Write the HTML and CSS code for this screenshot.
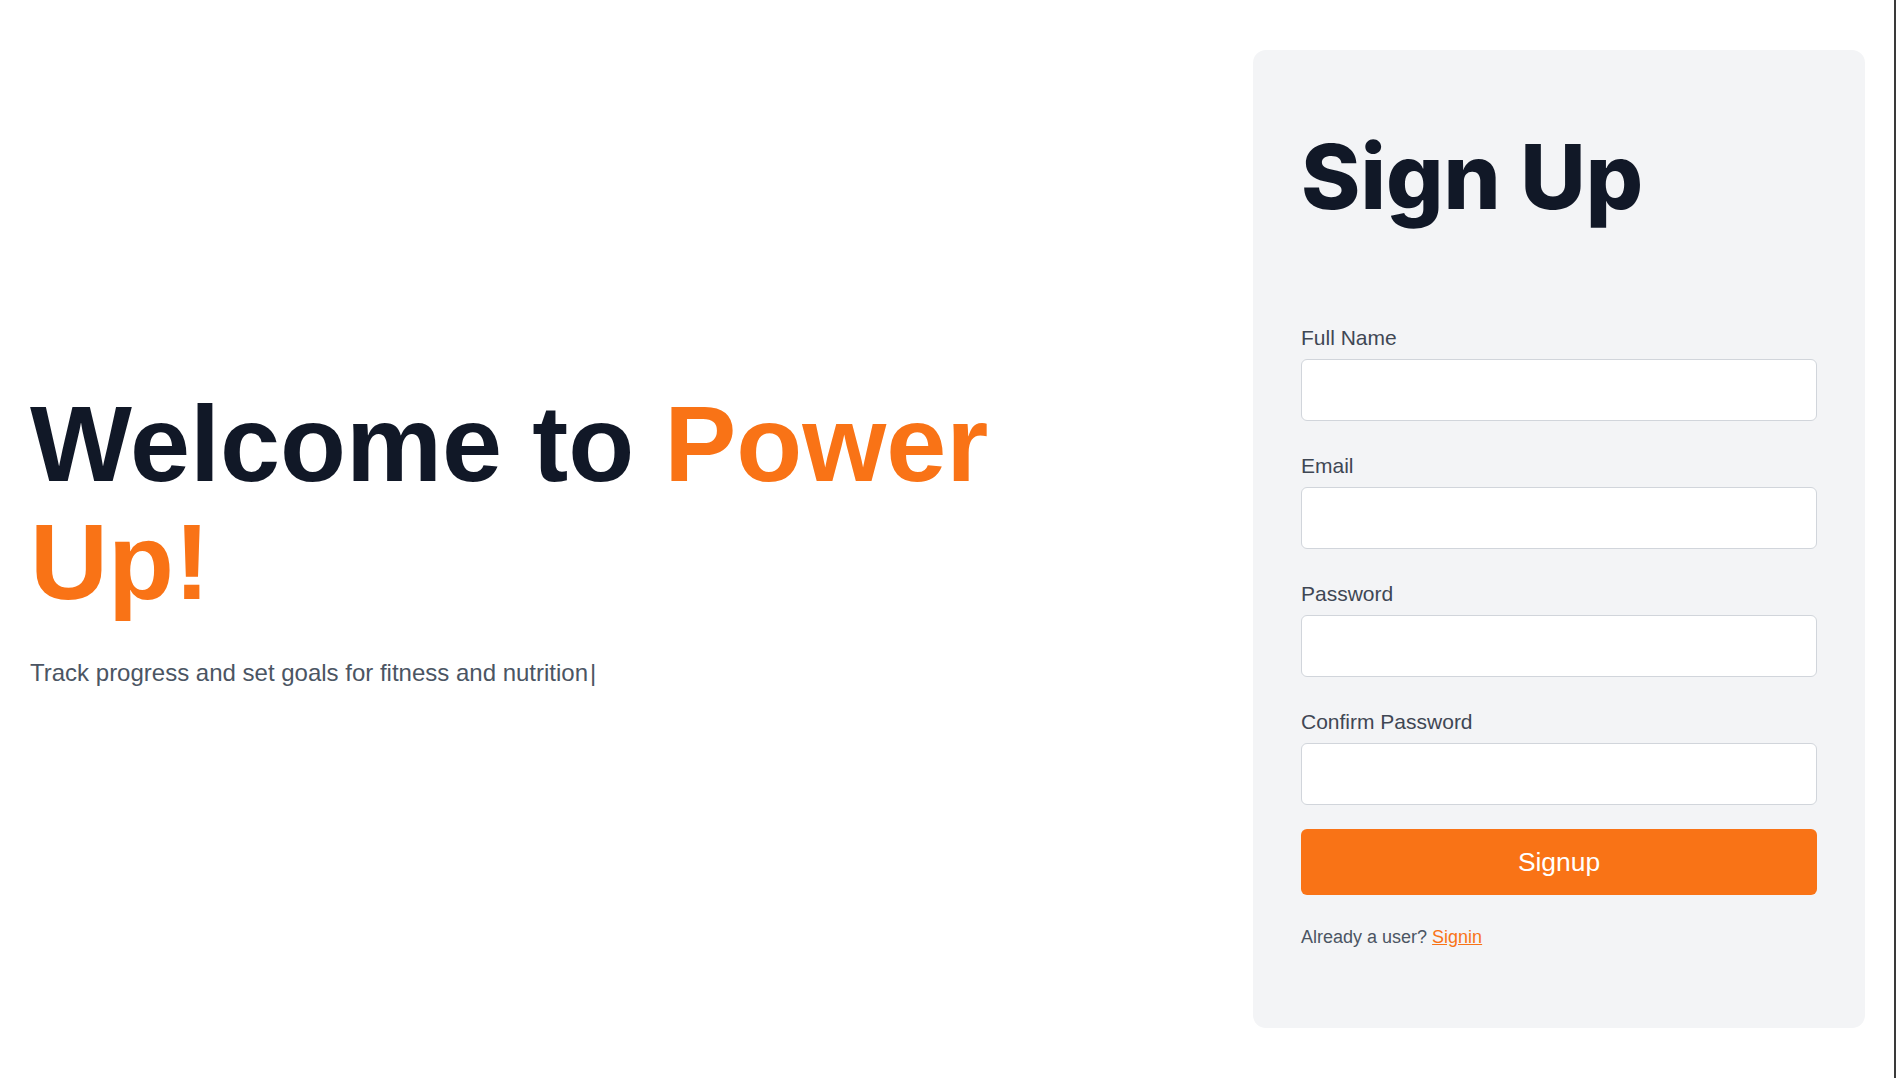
FILE: index.html
```html
<!DOCTYPE html>
<html lang="en">
<head>
<meta charset="utf-8">
<title>Power Up - Sign Up</title>
<link rel="stylesheet" href="styles.css">
</head>
<body>
<div class="frame">
  <main class="page">
    <section class="hero">
      <h1 class="hero-title">Welcome to <span class="accent">Power Up!</span></h1>
      <p class="hero-sub">Track progress and set goals for fitness and nutrition<span class="caret">|</span></p>
    </section>
    <section class="card">
      <h2 class="card-title">Sign Up</h2>
      <form class="form">
        <div class="field">
          <label class="label" for="name">Full Name</label>
          <input class="input" id="name" type="text">
        </div>
        <div class="field">
          <label class="label" for="email">Email</label>
          <input class="input" id="email" type="email">
        </div>
        <div class="field">
          <label class="label" for="pw">Password</label>
          <input class="input" id="pw" type="password">
        </div>
        <div class="field field-last">
          <label class="label" for="pw2">Confirm Password</label>
          <input class="input" id="pw2" type="password">
        </div>
        <button class="btn" type="button">Signup</button>
      </form>
      <p class="switch">Already a user? <a class="switch-link" href="#">Signin</a></p>
    </section>
  </main>
</div>
</body>
</html>
```

FILE: styles.css
```css
* { box-sizing: border-box; }
html, body { margin: 0; padding: 0; background: #ffffff; }
body {
  font-family: "Liberation Sans", Arial, sans-serif;
  color: #111827;
}
.frame {
  width: 1896px;
  height: 1078px;
  border-right: 2px solid #3a3a3a;
  overflow: hidden;
}
.page {
  display: flex;
  align-items: center;
  height: 1078px;
  padding-left: 30px;
  padding-right: 29px;
}
.hero {
  flex: 1;
  padding-bottom: 4px;
}
.hero-title {
  margin: 0;
  max-width: 1050px;
  font-size: 108px;
  line-height: 118px;
  font-weight: 700;
  color: #111827;
}
.accent { color: #f97316; }
.hero-sub {
  margin: 36px 0 0;
  font-size: 24px;
  line-height: 32px;
  color: #4b5563;
}
.caret {
  color: #4b5563;
  margin-left: 2px;
}
.card {
  width: 612px;
  height: 978px;
  background: #f3f4f6;
  border-radius: 13px;
  padding: 48px;
}
.card-title {
  margin: 34px 0 102px;
  font-family: Inter, "Noto Sans", sans-serif;
  font-weight: 800;
  font-size: 90px;
  line-height: 90px;
  color: #111827;
}
.form { display: flex; flex-direction: column; }
.field { display: flex; flex-direction: column; margin-bottom: 31px; }
.field-last { margin-bottom: 24px; }
.label {
  font-size: 21px;
  line-height: 28px;
  color: #3f4754;
  margin-bottom: 7px;
}
.input {
  height: 62px;
  width: 100%;
  background: #ffffff;
  border: 1px solid #d1d5db;
  border-radius: 6px;
  font: inherit;
}
.btn {
  height: 66px;
  width: 100%;
  background: #f97316;
  color: #ffffff;
  border: 0;
  border-radius: 6px;
  font-family: "Liberation Sans", Arial, sans-serif;
  font-size: 26.4px;
}
.switch {
  margin: 29px 0 0;
  font-size: 18px;
  line-height: 26px;
  color: #4b5563;
}
.switch-link {
  color: #f97316;
  text-decoration: underline;
}
```
